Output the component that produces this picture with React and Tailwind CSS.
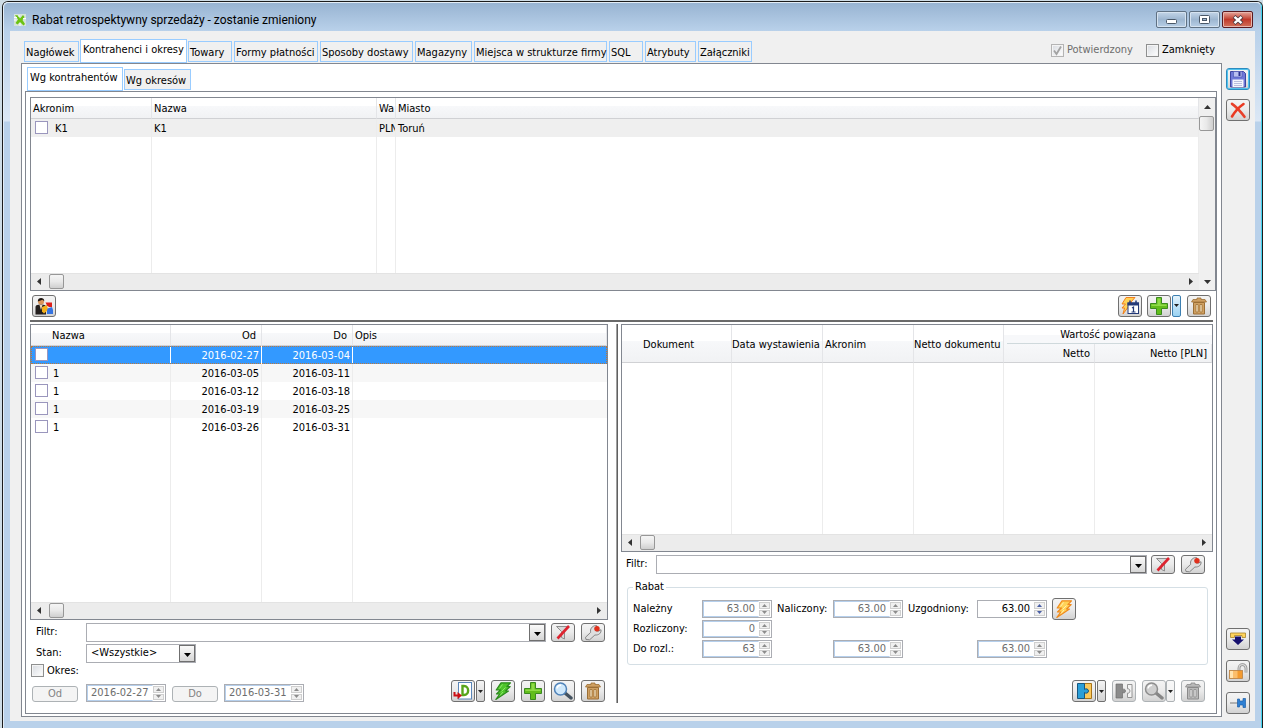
import React from "react";

const HEAD =
  "border-b border-r border-b-[#d0d1d4] border-r-[#e4e5e8] p-0 pt-[2px] font-normal whitespace-nowrap overflow-hidden";
const CELL = "border-r border-[#ececec] p-0 pt-[2px] whitespace-nowrap overflow-hidden";
const TICKCELL = "border-r border-[#ececec] p-0 align-top whitespace-nowrap overflow-hidden";
const HEADBG = "bg-linear-to-b from-white from-42% via-[#f7f8fa] via-42% to-[#f1f2f4]";

/* ---------- controls ---------- */

const TONES = {
  normal: "border-[#707070]",
  soft: "border-[#adb2b5]",
  focus: "border-[#2c8bbf] ring-1 ring-inset ring-[#4fc3ee]",
};

function ToolButton({ label, tone = "normal", small = false, children }) {
  return (
    <button
      type="button"
      aria-label={label}
      title={label}
      className={
        "flex w-[24px] shrink-0 items-center justify-center rounded-[3px] border bg-linear-to-b from-[#f4f4f4] via-[#ebebeb] via-48% to-[#d2d2d2] " +
        (small ? "h-[19px] " : "h-[22px] ") +
        TONES[tone]
      }
    >
      {children}
    </button>
  );
}

function DropButton({ label, tone = "normal" }) {
  const tones = {
    normal: "ml-px border-[#707070] from-[#f4f4f4] to-[#d2d2d2]",
    soft: "border-[#adb2b5] from-[#f8f8f8] to-[#eeeeee]",
    blue: "ml-px border-[#3c7fb1] from-[#e4f3fc] to-[#9bd3f2]",
  };
  return (
    <button
      type="button"
      aria-label={label}
      className={
        "flex h-[22px] w-[9px] shrink-0 items-center justify-center rounded-[2px] border bg-linear-to-b " +
        tones[tone]
      }
    >
      <svg width="5" height="3" viewBox="0 0 5 3">
        <path d="M0 0h5L2.5 3z" fill="#222" />
      </svg>
    </button>
  );
}

function Combo({ id, className, options }) {
  return (
    <div className={"flex h-[19px] border border-[#abadb3] bg-white " + className}>
      <select
        id={id}
        className="min-w-0 flex-1 appearance-none bg-white pl-[4px] text-[11px] leading-[16px] outline-none"
      >
        {options.map((o) => (
          <option key={o}>{o}</option>
        ))}
      </select>
      <span className="pointer-events-none flex w-[16px] items-center justify-center border border-[#6f6f6f] bg-linear-to-b from-[#fafafa] to-[#d6d6d6] pt-[3px]">
        <svg width="7" height="4" viewBox="0 0 7 4">
          <path d="M0 0h7L3.5 4z" fill="#000" />
        </svg>
      </span>
    </div>
  );
}

function Spin({ id, label, value, wide = false, active = false, left = false }) {
  const arrow = active ? "#4a5fa5" : "#8c8c8c";
  return (
    <div
      className={
        "flex h-[18px] shrink-0 border border-[#abadb3] bg-white pr-px " +
        (wide ? "w-[80px]" : "w-[70px]")
      }
    >
      <input
        id={id}
        aria-label={label}
        type="text"
        defaultValue={value}
        disabled={!active}
        className={
          "min-w-0 flex-1 border px-[3px] text-[11px] leading-[14px] outline-none " +
          (left ? "text-left " : "text-right ") +
          (active ? "border-white text-black" : "border-[#b5cfec] border-r-white text-[#6d6d6d]")
        }
      />
      <span className="flex w-[11px] flex-col gap-px py-px">
        <button
          type="button"
          aria-label="Zwiększ"
          disabled={!active}
          className="flex flex-1 items-center justify-center border border-[#cfcfcf] bg-[#f0f0f0]"
        >
          <svg width="5" height="3" viewBox="0 0 5 3">
            <path d="M0 3h5L2.5 0z" fill={arrow} />
          </svg>
        </button>
        <button
          type="button"
          aria-label="Zmniejsz"
          disabled={!active}
          className="flex flex-1 items-center justify-center border border-[#cfcfcf] bg-[#f0f0f0]"
        >
          <svg width="5" height="3" viewBox="0 0 5 3">
            <path d="M0 0h5L2.5 3z" fill={arrow} />
          </svg>
        </button>
      </span>
    </div>
  );
}

function Tick({ id, label, checked = false, disabled = false }) {
  return (
    <span className="grid size-[13px] shrink-0">
      <input
        id={id}
        aria-label={label}
        type="checkbox"
        defaultChecked={checked}
        disabled={disabled}
        className={
          "peer col-start-1 row-start-1 size-[13px] appearance-none border bg-linear-to-br from-[#d8dbe0] to-white ring-1 ring-inset ring-[#f4f4f4] " +
          (disabled ? "border-[#b4b4b4]" : "border-[#8e8f8f]")
        }
      />
      <svg
        className="pointer-events-none invisible col-start-1 row-start-1 peer-checked:visible"
        width="13"
        height="13"
        viewBox="0 0 13 13"
      >
        <path d="M3 6.5l2.5 3.5L10 2.5" fill="none" stroke="#a3a3a3" strokeWidth="1.8" />
      </svg>
    </span>
  );
}

function TickCell({ label, text, gap }) {
  return (
    <span className={"flex h-[17px] items-start pl-[4px] " + gap}>
      <input
        type="checkbox"
        aria-label={label}
        className="mt-[2px] size-[13px] shrink-0 appearance-none border border-[#9a96bd] bg-white"
      />
      <span className="pt-[3px]">{text}</span>
    </span>
  );
}

function HScroll() {
  return (
    <div className="flex h-[17px] shrink-0 items-start border-t border-[#e3e3e3] bg-[#ececec]">
      <button type="button" aria-label="W lewo" className="mr-[2px] flex h-[15px] w-[16px] items-center justify-center">
        <svg width="4" height="7" viewBox="0 0 4 7">
          <path d="M4 0v7L0 3.5z" fill="#333" />
        </svg>
      </button>
      <span className="h-[15px] w-[15px] rounded-[2px] border border-[#979797] bg-linear-to-b from-[#f5f5f5] via-[#e9e9e9] via-50% to-[#cfcfcf]" />
      <span className="flex-1" />
      <button type="button" aria-label="W prawo" className="flex h-[15px] w-[17px] items-center justify-center">
        <svg width="4" height="7" viewBox="0 0 4 7">
          <path d="M0 0v7l4-3.5z" fill="#333" />
        </svg>
      </button>
    </div>
  );
}

/* ---------- icons ---------- */

function Icon({ children, h = 18 }) {
  return (
    <svg width="20" height={h} viewBox={h === 18 ? "0 0 20 18" : "0 0 20 17"} className="shrink-0">
      {children}
    </svg>
  );
}

const PlusIcon = () => (
  <Icon>
    <path d="M7.500 0.500h5v6h6v5h-6v6h-5v-6h-6v-5h6z" fill="#62bd1c" stroke="#3a8a1e" />
    <path d="M8.500 1.500h3v6h6v1.500H2.500V7.500h6z" fill="#8fdb48" />
  </Icon>
);

const TrashIcon = ({ gray = false }) => {
  const a = gray ? "#8a8a8a" : "#9c6f35";
  const b = gray ? "#b9b9b9" : "#cfa062";
  const c = gray ? "#f0f0f0" : "#fff0d0";
  return (
    <Icon>
      <path d="M8 1h4v1.500h4l1.500 2.500h-15L4 2.500h4z" fill={b} stroke={a} strokeWidth="0.8" />
      <path d="M4.500 5.500h11V17h-11z" fill={b} stroke={a} />
      <path d="M7 7.500h2v7.500H7zM11 7.500h2v7.500h-2z" fill={c} stroke={a} strokeWidth="0.8" />
    </Icon>
  );
};

const LensIcon = ({ gray = false }) => (
  <Icon>
    <path d="M12 11l6 5" stroke={gray ? "#868686" : "#44525f"} strokeWidth="3.400" strokeLinecap="round" />
    <circle cx="7.500" cy="7" r="6" fill={gray ? "#cfcfcf" : "#cfe8fb"} stroke={gray ? "#8e8e8e" : "#4f82b8"} strokeWidth="1.500" />
    <path d="M4 6.500a3.800 3.800 0 0 1 4-3.200" stroke="#fff" strokeWidth="1.500" fill="none" />
  </Icon>
);

const FunnelIcon = () => (
  <Icon h={17}>
    <path d="M3.500 2.500h12l-4 5v7.500l-3-1.500v-6z" fill="#d9d9d9" stroke="#8e8e8e" strokeWidth="1" />
    <path d="M4.500 14.500L16 2" stroke="#dd2430" strokeWidth="2.600" />
  </Icon>
);

const WrenchIcon = () => (
  <Icon h={17}>
    <path
      d="M3 15.500l-.5-2.200 5.200-5c-.8-3 1-6.300 5-6.800l1.300.4-2 2.600.8 2.300 2.500.4 2.700-1.500c.6 3.300-2.200 5.700-6.100 5.300l-5.300 4.800z"
      fill="#dedede"
      stroke="#858585"
      strokeWidth="1"
    />
    <circle cx="14" cy="4.800" r="2.700" fill="#e0301c" />
  </Icon>
);

const BoltIcon = ({ green = false }) => (
  <Icon>
    <path
      d="M8 0.800H17.500L14 4.500h3.200L12.500 9h3L2.800 17.500l4-5.500H3.500L7.500 8H3.200z"
      fill={green ? "#4fc52b" : "#ffd257"}
      stroke={green ? "#2b8a1c" : "#f08a1d"}
      strokeWidth="1.200"
      strokeLinejoin="round"
    />
    <path d="M9.500 2.500L6.500 6.500M12.500 5.500L8.500 9.500M10 10L7 13.500" stroke={green ? "#8de86a" : "#fff0b0"} strokeWidth="1" />
  </Icon>
);

const CalendarBoltIcon = () => (
  <Icon>
    <path d="M6 0.500h9L11 5H12L3 17l1.500-6H2L5.500 7H2z" fill="#ffd257" stroke="#f07f1d" />
    <rect x="8" y="6" width="10.500" height="10.500" fill="#fff" stroke="#243a78" />
    <path d="M7.500 5.500h11.500v3H7.500z" fill="#243a78" />
    <path d="M10 3.500v2.500M16 3.500v2.500" stroke="#243a78" strokeWidth="1.500" />
    <path d="M12 11l1.500-1v5M11.500 15h4" stroke="#243a78" strokeWidth="1.200" fill="none" />
  </Icon>
);

const PersonIcon = () => (
  <Icon>
    <circle cx="7" cy="4.800" r="3" fill="#d9955a" />
    <path d="M3.800 4.500C3.500 0 10.500 0 10.300 4.200L8.500 2.800z" fill="#1c1512" />
    <path d="M1.500 17.500V10c0-1.500 1.500-2 3-2.200h5c1.500.2 2.500.8 2.500 2.200v7.500z" fill="#241f1e" />
    <path d="M5.500 8L7 13l1.500-5z" fill="#f0d9b8" />
    <path d="M8 10l5-2 1 5-4 3.500-2-2z" fill="#f3b01b" />
    <path d="M11.500 5.500h6.500v4.500h-3l-2-1.500z" fill="#dd1f1a" />
    <path d="M13.500 11.500l4.500-1.500 1 3v4h-6v-3z" fill="#3573e0" />
  </Icon>
);

const DocIcon = () => (
  <Icon>
    <rect x="5.500" y="0.500" width="13" height="16.500" fill="#fff" stroke="#5b86b8" />
    <path d="M9.500 4h1.500c5.500 0 5.500 9 0 9H9.500z" fill="none" stroke="#58a51b" strokeWidth="2.400" />
    <path d="M1.500 10v3.500H5" fill="none" stroke="#cc1016" strokeWidth="2" />
    <path d="M4.500 10l4.500 3.500-4.500 3.800z" fill="#cc1016" />
  </Icon>
);

const SaveIcon = () => (
  <Icon>
    <path d="M2.500 1.500h13l2 2v13.500h-15z" fill="#6f78d8" stroke="#3f459f" />
    <path d="M5.500 1.500h8.500V7H5.500z" fill="#b9bff0" stroke="#4f57b5" strokeWidth="0.700" />
    <path d="M10.500 2h2v4h-2z" fill="#2a3190" />
    <path d="M4.500 9.500h11v7.500h-11z" fill="#f4f5fd" />
    <path d="M6 11.500h8M6 13.500h8M6 15.500h8" stroke="#a9aed4" strokeWidth="0.800" />
  </Icon>
);

const CrossIcon = () => (
  <Icon>
    <path d="M4 2.800c4 2.700 8.500 7.500 12.500 13" stroke="#e8402a" strokeWidth="2.600" strokeLinecap="round" fill="none" />
    <path d="M15.500 3C10.500 6.500 7 10.500 4 15.500" stroke="#ea3a22" strokeWidth="2.600" strokeLinecap="round" fill="none" />
  </Icon>
);

const DropDownIcon = () => (
  <Icon>
    <path d="M2.500 3h15v4.500h-3.500V5.500H6.500v2H2.500z" fill="#ffd35c" stroke="#a8842a" strokeWidth="0.800" />
    <path d="M7 6.500h6V9.500h3l-6 5.500-6-5.500h3z" fill="#16106e" />
  </Icon>
);

const UnlockIcon = () => (
  <Icon>
    <path d="M11 9V6.200a3.500 3.500 0 0 1 7 0V10.500" fill="none" stroke="#8d8d8d" strokeWidth="2.800" />
    <path d="M11 9V6.200a3.500 3.500 0 0 1 7 0V10.500" fill="none" stroke="#d9d9d9" strokeWidth="1.200" />
    <rect x="1.500" y="8.500" width="13" height="8" fill="#f39a30" stroke="#b98142" strokeWidth="0.800" />
    <path d="M2 9h3.500v7H2z" fill="#ffe3b0" />
    <path d="M5.500 9h4v7h-4z" fill="#fbbe6c" />
  </Icon>
);

const PinIcon = () => (
  <Icon>
    <path d="M2 9H10" stroke="#9a9a9a" strokeWidth="1.400" />
    <path d="M9.500 5h2v2h3.500V4.500h2.500v9H15v-2.500h-3.500v2h-2z" fill="#2f80d3" stroke="#1c5fa8" strokeWidth="0.700" />
  </Icon>
);

const PuzzleIcon = () => (
  <Icon>
    <path d="M9.500 1.500h8v15h-8z" fill="#fbc95c" stroke="#a8741a" />
    <path d="M3.500 1.500h7v6c1-1.200 4-.8 4 1.500s-3 2.700-4 1.500v6h-7z" fill="#2b9fd8" stroke="#17567f" />
  </Icon>
);

const SplitPuzzleIcon = () => (
  <Icon>
    <path d="M2 2h6.500v5.800c.8-1.200 3-.8 3 1.200s-2.200 2.400-3 1.200V16H2z" fill="#8b8b8b" stroke="#6f6f6f" strokeWidth="0.700" />
    <path d="M13.500 2.500h4.500v13h-4.500v-4.300c3.200.6 3.200-5 0-4.400z" fill="#f4f4f4" stroke="#8b8b8b" strokeWidth="0.900" />
  </Icon>
);

/* ---------- data ---------- */

const TABS = [
  ["Nagłówek", "w-[55px]"],
  ["Kontrahenci i okresy", "w-[107px]"],
  ["Towary", "w-[44px]"],
  ["Formy płatności", "w-[84px]"],
  ["Sposoby dostawy", "w-[93px]"],
  ["Magazyny", "w-[57px]"],
  ["Miejsca w strukturze firmy", "w-[133px]"],
  ["SQL", "w-[34px]"],
  ["Atrybuty", "w-[51px]"],
  ["Załączniki", "w-[54px]"],
];

const PERIODS = [
  ["1", "2016-03-05", "2016-03-11"],
  ["1", "2016-03-12", "2016-03-18"],
  ["1", "2016-03-19", "2016-03-25"],
  ["1", "2016-03-26", "2016-03-31"],
];

function Tab({ name, width, active }) {
  return (
    <button
      type="button"
      role="tab"
      aria-selected={active}
      className={
        "flex shrink-0 border border-[#99ccff] text-left whitespace-nowrap " +
        width +
        (active ? " -mx-px h-[24px] bg-white pt-[3px] pl-[2px]" : " mb-px h-[21px] bg-[#f0f0f0] pt-[4px] pl-px")
      }
    >
      {name}
    </button>
  );
}

/* ---------- panels ---------- */

function ContractorGrid() {
  return (
    <section className="flex h-[194px] shrink-0 border border-[#828790] bg-white">
      <div className="flex min-w-0 flex-1 flex-col">
        <div className="min-h-0 flex-1">
          <table className="h-full w-full table-fixed border-separate border-spacing-0">
            <colgroup>
              <col className="w-[121px]" />
              <col className="w-[225px]" />
              <col className="w-[19px]" />
              <col />
            </colgroup>
            <thead>
              <tr className="h-[21px] text-left">
                <th className={HEAD + " pl-[2px] " + HEADBG}>Akronim</th>
                <th className={HEAD + " pl-[2px] " + HEADBG}>Nazwa</th>
                <th className={HEAD + " pl-[2px] " + HEADBG}>Wa</th>
                <th className={HEAD + " pl-[2px] " + HEADBG}>Miasto</th>
              </tr>
            </thead>
            <tbody>
              <tr className="h-[18px] bg-[#efefef]">
                <td className={TICKCELL}>
                  <TickCell label="K1" text="K1" gap="gap-[7px]" />
                </td>
                <td className={CELL + " pl-[2px]"}>K1</td>
                <td className={CELL + " pl-[2px]"}>PLN</td>
                <td className={CELL + " pl-[2px]"}>Toruń</td>
              </tr>
              <tr className="h-full" aria-hidden="true">
                <td className={CELL} />
                <td className={CELL} />
                <td className={CELL} />
                <td className={CELL} />
              </tr>
            </tbody>
          </table>
        </div>
        <HScroll />
      </div>
      <div className="flex w-[16px] shrink-0 flex-col items-start bg-[#f0f0f0]">
        <button type="button" aria-label="W górę" className="flex h-[18px] w-[16px] items-center justify-center">
          <svg width="7" height="4" viewBox="0 0 7 4">
            <path d="M0 4h7L3.500 0z" fill="#333" />
          </svg>
        </button>
        <span className="h-[15px] w-[15px] rounded-[2px] border border-[#979797] bg-linear-to-r from-[#f5f5f5] via-[#e9e9e9] via-50% to-[#cfcfcf]" />
        <span className="flex-1" />
        <button type="button" aria-label="W dół" className="flex h-[17px] w-[16px] items-center justify-center">
          <svg width="7" height="4" viewBox="0 0 7 4">
            <path d="M0 0h7L3.500 4z" fill="#333" />
          </svg>
        </button>
      </div>
    </section>
  );
}

function PeriodPanel() {
  const sel = "border-r border-white p-0 pt-[2px] overflow-hidden ";
  return (
    <section className="flex min-w-0 flex-[578] flex-col">
      <div className="flex min-h-0 flex-1 flex-col border border-[#828790] bg-white">
        <div className="min-h-0 flex-1">
          <table className="h-full w-full table-fixed border-separate border-spacing-0">
            <colgroup>
              <col className="w-[140px]" />
              <col className="w-[91px]" />
              <col className="w-[91px]" />
              <col />
            </colgroup>
            <thead>
              <tr className="h-[21px]">
                <th className={HEAD + " pl-[21px] text-left " + HEADBG}>Nazwa</th>
                <th className={HEAD + " pr-[5px] text-right " + HEADBG}>Od</th>
                <th className={HEAD + " pr-[5px] text-right " + HEADBG}>Do</th>
                <th className={HEAD + " pl-[2px] text-left " + HEADBG}>Opis</th>
              </tr>
            </thead>
            <tbody>
              <tr className="h-[18px] bg-[#3399ff] text-white outline-1 -outline-offset-1 outline-[#c07838] outline-dotted">
                <td className="border-r border-white p-0 align-top">
                  <TickCell label="2016-02-27" text="" gap="gap-[5px]" />
                </td>
                <td className={sel + "pr-[2px] text-right"}>2016-02-27</td>
                <td className={sel + "pr-[2px] text-right"}>2016-03-04</td>
                <td className="p-0" />
              </tr>
              {PERIODS.map(([name, from, to], i) => (
                <tr key={from} className={"h-[18px] " + (i % 2 ? "bg-white" : "bg-[#f7f7f7]")}>
                  <td className={TICKCELL}>
                    <TickCell label={from} text={name} gap="gap-[5px]" />
                  </td>
                  <td className={CELL + " pr-[2px] text-right"}>{from}</td>
                  <td className={CELL + " pr-[2px] text-right"}>{to}</td>
                  <td className="p-0" />
                </tr>
              ))}
              <tr className="h-full" aria-hidden="true">
                <td className={CELL} />
                <td className={CELL} />
                <td className={CELL} />
                <td className="p-0" />
              </tr>
            </tbody>
          </table>
        </div>
        <HScroll />
      </div>

      <div className="mt-[2px] flex h-[20px] items-center pr-[3px] pl-[6px]">
        <label htmlFor="filter-periods" className="w-[50px]">Filtr:</label>
        <Combo id="filter-periods" className="flex-1" options={[""]} />
        <div className="ml-[5px] flex gap-[6px]">
          <ToolButton label="Wyczyść filtr" small><FunnelIcon /></ToolButton>
          <ToolButton label="Konstruktor filtra" small><WrenchIcon /></ToolButton>
        </div>
      </div>
      <div className="mt-[2px] flex h-[18px] items-center pl-[6px]">
        <label htmlFor="state" className="w-[50px]">Stan:</label>
        <Combo id="state" className="w-[110px]" options={["<Wszystkie>"]} />
      </div>
      <div className="mt-px flex h-[15px] items-center gap-[3px] pl-px">
        <Tick id="period" />
        <label htmlFor="period">Okres:</label>
      </div>
      <div className="mt-[2px] mb-[11px] flex h-[22px] items-end pr-[3px] pl-[2px]">
        <button type="button" disabled className="h-[16px] w-[46px] rounded-[3px] border border-[#adb2b5] bg-[#f4f4f4] leading-[14px] text-[#838383]">
          Od
        </button>
        <span className="ml-[8px]"><Spin label="Data od" value="2016-02-27" wide left /></span>
        <button type="button" disabled className="ml-[6px] h-[16px] w-[46px] rounded-[3px] border border-[#adb2b5] bg-[#f4f4f4] leading-[14px] text-[#838383]">
          Do
        </button>
        <span className="ml-[6px]"><Spin label="Data do" value="2016-03-31" wide left /></span>
        <div className="ml-auto flex gap-[6px]">
          <div className="flex">
            <ToolButton label="Generuj dokument"><DocIcon /></ToolButton>
            <DropButton label="Więcej dokumentów" />
          </div>
          <ToolButton label="Nalicz"><BoltIcon green /></ToolButton>
          <ToolButton label="Dodaj"><PlusIcon /></ToolButton>
          <ToolButton label="Podgląd"><LensIcon /></ToolButton>
          <ToolButton label="Usuń"><TrashIcon /></ToolButton>
        </div>
      </div>
    </section>
  );
}

function DocumentPanel() {
  const head = HEAD + " ";
  return (
    <section className="flex min-w-0 flex-[592] flex-col">
      <div className="flex min-h-0 flex-1 flex-col border border-[#828790] bg-white">
        <div className="min-h-0 flex-1">
          <table className="h-full w-full table-fixed border-separate border-spacing-0">
            <colgroup>
              <col className="w-[110px]" />
              <col className="w-[91px]" />
              <col className="w-[91px]" />
              <col className="w-[90px]" />
              <col className="w-[91px]" />
              <col />
            </colgroup>
            <thead className="text-left">
              <tr className="h-[19px]">
                <th rowSpan={2} className={head + "pl-[21px] " + HEADBG}>Dokument</th>
                <th rowSpan={2} className={head + HEADBG}>Data wystawienia</th>
                <th rowSpan={2} className={head + "pl-[2px] " + HEADBG}>Akronim</th>
                <th rowSpan={2} className={head + HEADBG}>Netto dokumentu</th>
                <th colSpan={2} className="bg-linear-to-b from-white from-50% to-[#f7f8fa] to-50% p-0 text-center font-normal">
                  <span className="mx-[3px] block border-b border-[#cfd9dc] pt-[2px] leading-[16px]">Wartość powiązana</span>
                </th>
              </tr>
              <tr className="h-[19px] bg-linear-to-b from-[#f7f8fa] to-[#f1f2f4]">
                <th className={head + "pr-[4px] text-right"}>Netto</th>
                <th className={head + "pr-[4px] text-right"}>Netto [PLN]</th>
              </tr>
            </thead>
            <tbody>
              <tr className="h-full" aria-hidden="true">
                <td className={CELL} />
                <td className={CELL} />
                <td className={CELL} />
                <td className={CELL} />
                <td className={CELL} />
                <td className="p-0" />
              </tr>
            </tbody>
          </table>
        </div>
        <HScroll />
      </div>

      <div className="mt-[2px] flex h-[20px] items-center pr-[8px] pl-[5px]">
        <label htmlFor="filter-docs" className="w-[30px]">Filtr:</label>
        <Combo id="filter-docs" className="flex-1" options={[""]} />
        <div className="ml-[4px] flex gap-[6px]">
          <ToolButton label="Wyczyść filtr dokumentów" small><FunnelIcon /></ToolButton>
          <ToolButton label="Konstruktor filtra dokumentów" small><WrenchIcon /></ToolButton>
        </div>
      </div>

      <fieldset className="mt-[6px] mr-[5px] ml-[6px] h-[85px] rounded-[3px] border border-[#d5dfe5] pl-[5px]">
        <legend className="px-[2px] leading-[14px]">Rabat</legend>
        <div className="grid auto-rows-[18px] grid-cols-[69px_75px_56px_75px_69px_75px_24px] items-center gap-y-[2px] pt-[6px]">
          <label htmlFor="due">Należny</label>
          <Spin id="due" value="63.00" />
          <label htmlFor="accrued">Naliczony:</label>
          <Spin id="accrued" value="63.00" />
          <label htmlFor="agreed">Uzgodniony:</label>
          <Spin id="agreed" value="63.00" active />
          <ToolButton label="Przelicz"><BoltIcon /></ToolButton>

          <label htmlFor="settled" className="col-start-1">Rozliczony:</label>
          <Spin id="settled" value="0" />

          <label htmlFor="left" className="col-start-1">Do rozl.:</label>
          <Spin id="left" value="63" />
          <span />
          <Spin label="Naliczony do rozliczenia" value="63.00" />
          <span />
          <Spin label="Uzgodniony do rozliczenia" value="63.00" />
        </div>
      </fieldset>

      <div className="mt-[15px] mb-[11px] flex h-[22px] justify-end gap-[6px] pr-[8px]">
        <div className="flex">
          <ToolButton label="Powiąż"><PuzzleIcon /></ToolButton>
          <DropButton label="Opcje powiązania" />
        </div>
        <ToolButton label="Rozłącz" tone="soft"><SplitPuzzleIcon /></ToolButton>
        <div className="flex">
          <ToolButton label="Podgląd dokumentu" tone="soft"><LensIcon gray /></ToolButton>
          <DropButton label="Opcje podglądu" tone="soft" />
        </div>
        <ToolButton label="Usuń powiązanie" tone="soft"><TrashIcon gray /></ToolButton>
      </div>
    </section>
  );
}

function WindowButton({ label, danger = false, children }) {
  return (
    <button
      type="button"
      aria-label={label}
      className={
        "flex h-[17px] w-[31px] items-center justify-center rounded-[2px] border ring-1 ring-inset " +
        (danger
          ? "border-[#5b1a20] bg-linear-to-b from-[#e3a59c] via-[#c0392b] via-50% to-[#d2705a] ring-[#e8b5ac]"
          : "border-[#5f7183] bg-linear-to-b from-[#c3d5e8] via-[#9db6d0] via-50% to-[#b8cfe6] ring-[#d6e3f0]")
      }
    >
      {children}
    </button>
  );
}

export default function App() {
  return (
    <div
      className="flex h-screen overflow-hidden bg-[#cfdde6] pt-px pl-[2px] text-[11px] leading-[14px] text-black"
      style={{ fontFamily: '"DejaVu Sans Condensed", "Noto Sans", sans-serif' }}
    >
      <div className="flex min-w-0 flex-1 flex-col rounded-t-[6px] border-x border-t border-[#1c1c1c]">
        <div className="flex min-h-0 flex-1 flex-col rounded-t-[5px] border-t border-r border-l border-t-[#e3edf6] border-r-[#42d3ef] border-l-[#e3edf6] bg-[linear-gradient(to_bottom,#b9d1ea_28px,#dbe7f5_118px,#b9d1ea_119px)]">
          <header className="flex h-[28px] shrink-0 items-center rounded-t-[5px] bg-linear-to-b from-[#98b4d2] to-[#b9d1ea] pt-[5px] pr-[8px] pl-[10px]">
            <svg width="12" height="12" viewBox="0 0 12 12" className="shrink-0">
              <rect width="12" height="12" fill="#d5e3d8" />
              <path d="M1 1l3 .5L6 4.500 9 1l1.500 2L8.500 6l2.500 4-1.500 1.500L6 8 3.500 10.500 1.500 9 4 5.500z" fill="#6cc313" />
              <path d="M0 3.500h3M0 6h2.500M5 1v2M9 4.500h3M6 9v3" stroke="#fff" strokeWidth="0.900" />
            </svg>
            <h1 className="ml-[6px] font-['Roboto'] text-[12px] leading-[16px]">
              Rabat retrospektywny sprzedaży - zostanie zmieniony
            </h1>
            <div className="ml-auto flex gap-[2px]">
              <WindowButton label="Minimalizuj">
                <svg width="11" height="5" viewBox="0 0 11 5" className="mt-[4px]">
                  <rect x="0.500" y="0.500" width="10" height="4" rx="1" fill="#fff" stroke="#4a5868" />
                </svg>
              </WindowButton>
              <WindowButton label="Maksymalizuj">
                <svg width="11" height="9" viewBox="0 0 11 9">
                  <rect x="0.500" y="0.500" width="10" height="8" rx="1" fill="#fff" stroke="#4a5868" />
                  <rect x="3.500" y="3.500" width="4" height="2" fill="#9db6d0" stroke="#4a5868" />
                </svg>
              </WindowButton>
              <WindowButton label="Zamknij" danger>
                <svg width="12" height="10" viewBox="0 0 12 10">
                  <path d="M2 1.500l8 7M10 1.500l-8 7" stroke="#4a3a42" strokeWidth="4" />
                  <path d="M2.500 1.800l7 6.400M9.500 1.800l-7 6.400" stroke="#fff" strokeWidth="2.400" />
                </svg>
              </WindowButton>
            </div>
          </header>

          <main className="mx-[6px] mb-[7px] flex min-h-0 flex-1 bg-[#f0f0f0] pb-[4px]">
            <div className="flex min-w-0 flex-1 flex-col pl-[11px]">
              <div className="flex h-[32px] shrink-0 items-end pl-[3px]">
                <div role="tablist" className="flex items-end gap-[2px]">
                  {TABS.map(([name, width], i) => (
                    <Tab key={name} name={name} width={width} active={i === 1} />
                  ))}
                </div>
                <div className="mr-[7px] mb-[6px] ml-auto flex gap-[13px]">
                  <div className="flex items-center gap-[3px] text-[#6d6d6d]">
                    <Tick id="confirmed" checked disabled />
                    <label htmlFor="confirmed">Potwierdzony</label>
                  </div>
                  <div className="flex items-center gap-[3px]">
                    <Tick id="closed" />
                    <label htmlFor="closed">Zamknięty</label>
                  </div>
                </div>
              </div>

              <div className="flex min-h-0 flex-1 flex-col border border-[#828790] bg-white pr-[4px] pb-[2px] pl-[3px]">
                <div role="tablist" className="flex h-[27px] shrink-0 items-end gap-[2px] pl-[3px]">
                  <Tab name="Wg kontrahentów" width="w-[96px]" active />
                  <Tab name="Wg okresów" width="w-[67px]" active={false} />
                </div>
                <div className="flex min-h-0 flex-1 flex-col border border-[#828790] pt-[5px] pl-[4px]">
                  <ContractorGrid />
                  <div className="mr-[3px] flex h-[31px] shrink-0 items-center border-b-2 border-[#6a6a6a] pr-[2px] pl-[2px]">
                    <ToolButton label="Kontrahenci"><PersonIcon /></ToolButton>
                    <div className="ml-auto flex gap-[6px]">
                      <div className="flex gap-[5px]">
                        <ToolButton label="Generuj okresy"><CalendarBoltIcon /></ToolButton>
                        <div className="flex">
                          <ToolButton label="Dodaj kontrahenta"><PlusIcon /></ToolButton>
                          <DropButton label="Opcje dodawania" tone="blue" />
                        </div>
                      </div>
                      <ToolButton label="Usuń kontrahenta"><TrashIcon /></ToolButton>
                    </div>
                  </div>
                  <div className="flex min-h-0 flex-1 pt-[2px] pr-[3px]">
                    <PeriodPanel />
                    <div className="mr-[3px] mb-[10px] ml-[8px] w-[2px] shrink-0 border-r border-l border-r-[#606060] border-l-[#a0a0a0]" />
                    <DocumentPanel />
                  </div>
                </div>
              </div>
            </div>

            <aside className="flex w-[33px] shrink-0 flex-col items-center pt-[37px] pr-[2px] pb-[3px]">
              <ToolButton label="Zapisz" tone="focus"><SaveIcon /></ToolButton>
              <div className="mt-[9px]">
                <ToolButton label="Anuluj"><CrossIcon /></ToolButton>
              </div>
              <div className="mt-auto flex flex-col items-center gap-[10px]">
                <ToolButton label="Operacje"><DropDownIcon /></ToolButton>
                <ToolButton label="Odblokuj"><UnlockIcon /></ToolButton>
                <ToolButton label="Przypnij"><PinIcon /></ToolButton>
              </div>
            </aside>
          </main>
        </div>
      </div>
    </div>
  );
}
